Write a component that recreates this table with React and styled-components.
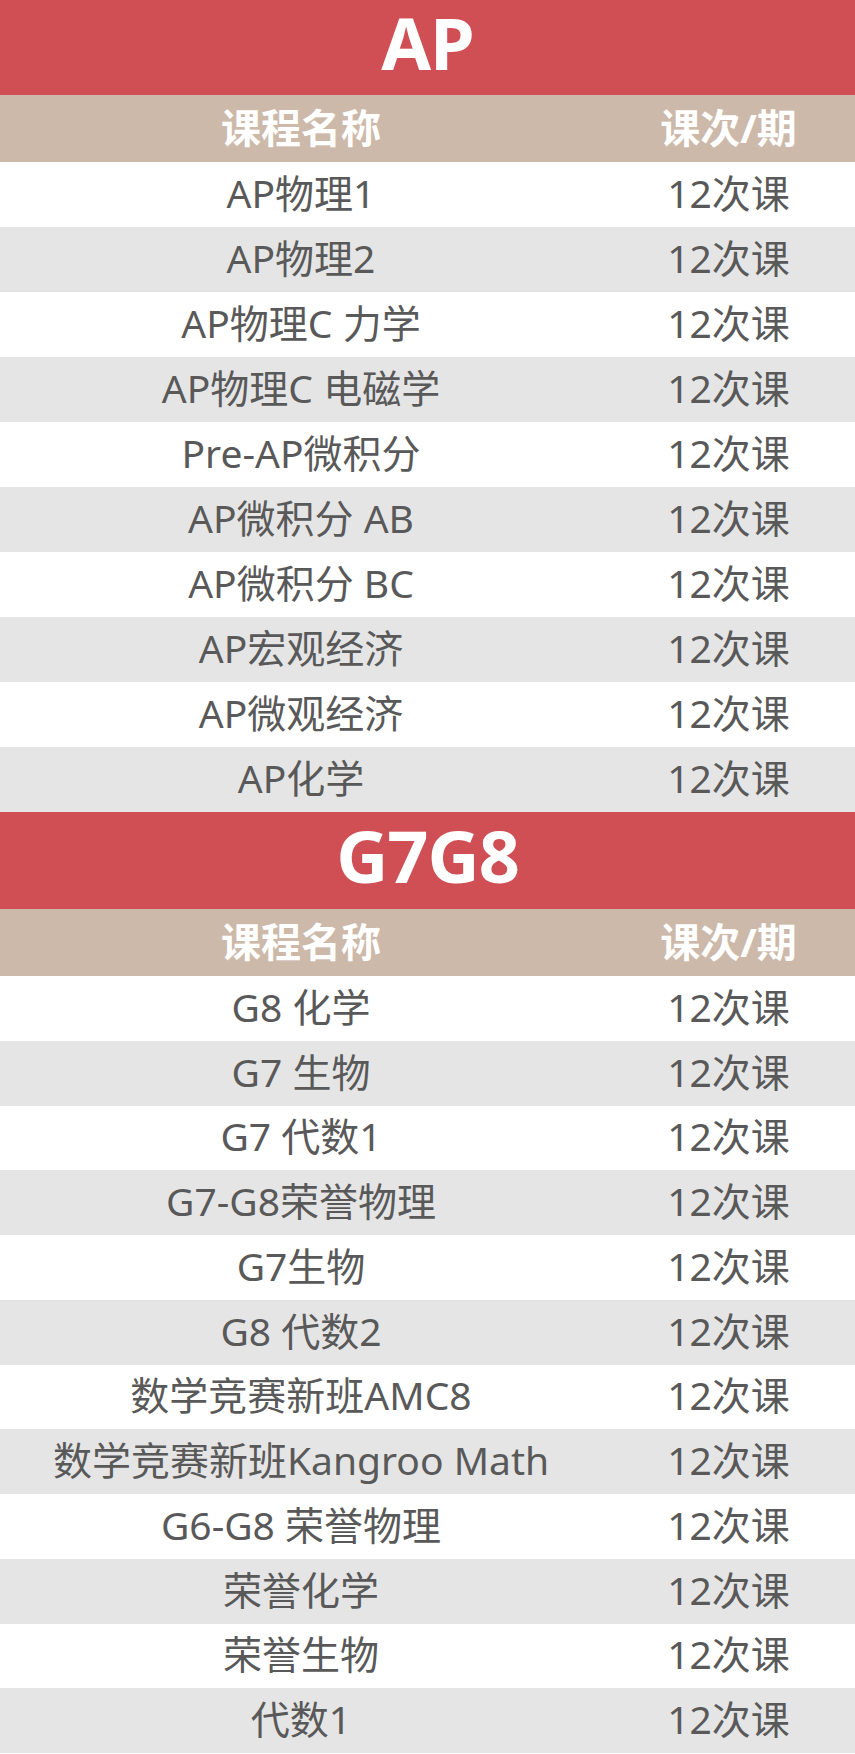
import React from "react";
import { styled, createGlobalStyle } from "styled-components";

const GlobalStyle = createGlobalStyle`
  html, body {
    margin: 0;
    padding: 0;
    background: #ffffff;
  }
  body {
    font-family: "Noto Sans", "Noto Sans CJK SC", sans-serif;
  }
`;

const Page = styled.div`
  width: 855px;
  display: flex;
  flex-direction: column;
`;

const Title = styled.div`
  height: ${(p) => p.$height}px;
  background: #cf4f54;
  color: #ffffff;
  font-size: 72px;
  font-weight: 700;
  line-height: 1;
  display: flex;
  align-items: center;
  justify-content: center;
  padding-bottom: 12px;
  box-sizing: border-box;
  letter-spacing: -1px;
`;

const Row = styled.div`
  display: grid;
  grid-template-columns: 602px 1fr;
  align-items: center;
  height: ${(p) => p.$height}px;
  background: ${(p) => (p.$striped ? "#e5e5e5" : "#ffffff")};
`;

const HeadRow = styled(Row)`
  height: 67px;
  background: #cdb9aa;
`;

const Cell = styled.div`
  text-align: center;
  font-size: ${(p) => (p.$head ? 40 : 39)}px;
  font-weight: ${(p) => (p.$head ? 700 : 400)};
  color: ${(p) => (p.$head ? "#ffffff" : "#595959")};
  white-space: nowrap;
  line-height: 1.2;
  padding-bottom: 2px;
`;

const sections = [
  {
    title: "AP",
    titleHeight: 95,
    rowHeight: 65,
    courses: [
      "AP物理1",
      "AP物理2",
      "AP物理C 力学",
      "AP物理C 电磁学",
      "Pre-AP微积分",
      "AP微积分 AB",
      "AP微积分 BC",
      "AP宏观经济",
      "AP微观经济",
      "AP化学",
    ],
  },
  {
    title: "G7G8",
    titleHeight: 97,
    rowHeight: 64.75,
    courses: [
      "G8 化学",
      "G7 生物",
      "G7 代数1",
      "G7-G8荣誉物理",
      "G7生物",
      "G8 代数2",
      "数学竞赛新班AMC8",
      "数学竞赛新班Kangroo Math",
      "G6-G8 荣誉物理",
      "荣誉化学",
      "荣誉生物",
      "代数1",
    ],
  },
];

export default function App() {
  return (
    <Page>
      <GlobalStyle />
      {sections.map((s) => (
        <React.Fragment key={s.title}>
          <Title $height={s.titleHeight}>{s.title}</Title>
          <HeadRow>
            <Cell $head>课程名称</Cell>
            <Cell $head>课次/期</Cell>
          </HeadRow>
          {s.courses.map((c, i) => (
            <Row key={c} $height={s.rowHeight} $striped={i % 2 === 1}>
              <Cell>{c}</Cell>
              <Cell>12次课</Cell>
            </Row>
          ))}
        </React.Fragment>
      ))}
    </Page>
  );
}
